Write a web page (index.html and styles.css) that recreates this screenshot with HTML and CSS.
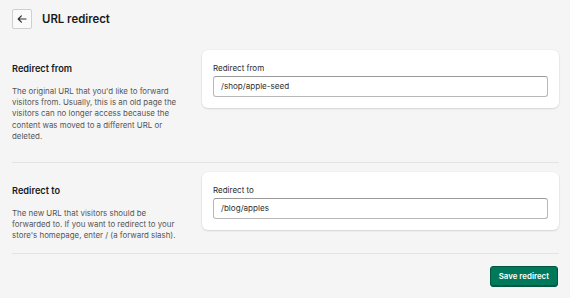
FILE: index.html
```html
<!DOCTYPE html>
<html lang="en">
<head>
<meta charset="utf-8">
<title>URL redirect</title>
<link rel="stylesheet" href="styles.css">
</head>
<body>
<div class="page">
  <header class="header">
    <button class="back" aria-label="Back">
      <svg width="10" height="10" viewBox="0 0 10 10" fill="none" stroke="#303030" stroke-width="1.2" stroke-linecap="round" stroke-linejoin="round"><path d="M9 5H1.2M4.4 1.8L1.2 5l3.2 3.2"/></svg>
    </button>
    <h1 class="title">URL redirect</h1>
  </header>

  <section class="section section-first">
    <div class="info">
      <h2 class="info-title">Redirect from</h2>
      <p class="info-text">The original URL that you'd like to forward visitors from. Usually, this is an old page the visitors can no longer access because the content was moved to a different URL or deleted.</p>
    </div>
    <div class="card">
      <label class="label">Redirect from</label>
      <div class="input">/shop/apple-seed</div>
    </div>
  </section>

  <section class="section section-second">
    <div class="info">
      <h2 class="info-title">Redirect to</h2>
      <p class="info-text">The new URL that visitors should be forwarded to. If you want to redirect to your store's homepage, enter / (a forward slash).</p>
    </div>
    <div class="card">
      <label class="label">Redirect to</label>
      <div class="input">/blog/apples</div>
    </div>
  </section>

  <footer class="footer">
    <button class="save">Save redirect</button>
  </footer>
</div>
</body>
</html>
```

FILE: styles.css
```css
* { box-sizing: border-box; }
html, body {
  margin: 0;
  padding: 0;
  background: #f5f5f5;
  font-family: Inter, "Liberation Sans", sans-serif;
  color: #303030;
}
.page {
  width: 570px;
  height: 298px;
  padding: 0 11px 0 12px;
}
.header {
  display: flex;
  align-items: center;
  gap: 10px;
  height: 38px;
}
.back {
  width: 20px;
  height: 20px;
  padding: 0;
  border: 1px solid #cfcfcf;
  border-radius: 2px;
  background: #fafafa;
  display: flex;
  align-items: center;
  justify-content: center;
}
.title {
  margin: 0;
  font-size: 11.4px;
  font-weight: 600;
  color: #1a1a1a;
}
.section {
  display: grid;
  grid-template-columns: 178px 1fr;
  column-gap: 12px;
  border-bottom: 1px solid #e3e3e3;
}
.section-first {
  padding-top: 12px;
  padding-bottom: 20px;
}
.section-second {
  padding-top: 9px;
  padding-bottom: 11px;
}
.info {
  padding-top: 12px;
}
.info-title {
  margin: 0 0 10px;
  font-size: 9.2px;
  line-height: 14px;
  font-weight: 600;
  color: #1a1a1a;
}
.info-text {
  margin: 0;
  font-size: 7.9px;
  line-height: 11.2px;
  color: #555;
  padding-right: 4px;
}
.card {
  align-self: start;
  background: #fff;
  border-radius: 6px;
  box-shadow: 0 1px 2px rgba(0,0,0,0.12), 0 0 0 0.5px rgba(0,0,0,0.04);
  padding: 12px 11px 11px;
}
.label {
  display: block;
  font-size: 8px;
  line-height: 12px;
  color: #2a2a2a;
  margin-bottom: 2px;
}
.input {
  height: 21px;
  border: 1px solid #b8b8b8;
  border-top-color: #9a9a9a;
  border-radius: 3px;
  padding: 0 7px;
  font-size: 8.1px;
  line-height: 19px;
  color: #303030;
  background: #fff;
}
.footer {
  display: flex;
  justify-content: flex-end;
  padding-top: 12px;
  padding-right: 1px;
}
.save {
  height: 21px;
  padding: 0 8px;
  border: 1px solid #00573f;
  border-radius: 3px;
  background: #00785a;
  color: #fff;
  font-family: Inter, "Liberation Sans", sans-serif;
  font-size: 7.9px;
  font-weight: 600;
  box-shadow: inset 0 -1px 0 rgba(0,0,0,0.25);
}
```
